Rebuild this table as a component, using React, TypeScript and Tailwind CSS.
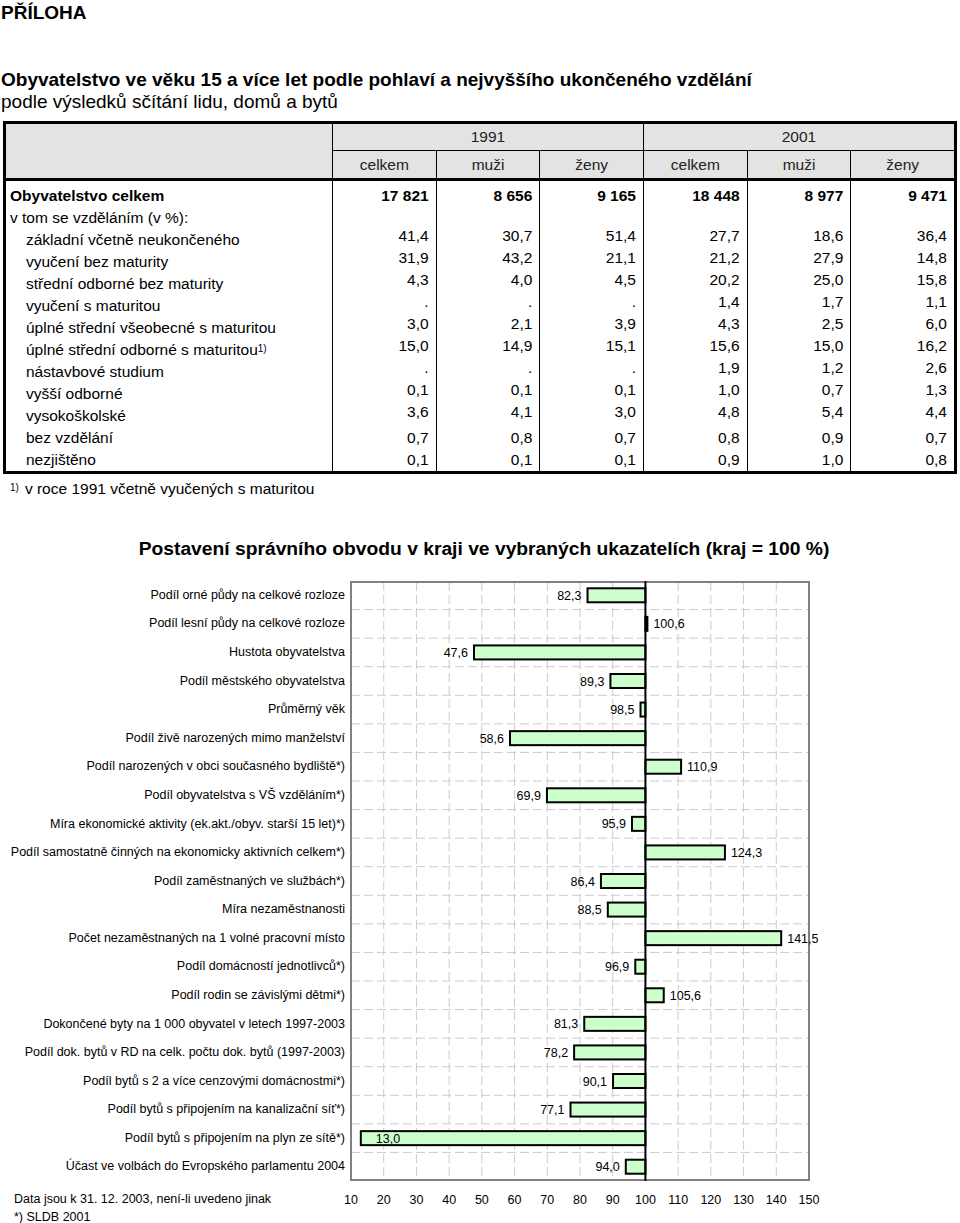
import React from "react";

const tableRows: { label: string; bold?: boolean; indent?: boolean; sup?: string; values: string[]; lift?: boolean }[] = [
  { label: "Obyvatelstvo celkem", bold: true, values: ["17 821", "8 656", "9 165", "18 448", "8 977", "9 471"] },
  { label: "v tom se vzděláním (v %):", values: ["", "", "", "", "", ""] },
  { label: "základní včetně neukončeného", indent: true, lift: true, values: ["41,4", "30,7", "51,4", "27,7", "18,6", "36,4"] },
  { label: "vyučení bez maturity", indent: true, lift: true, values: ["31,9", "43,2", "21,1", "21,2", "27,9", "14,8"] },
  { label: "střední odborné bez maturity", indent: true, lift: true, values: ["4,3", "4,0", "4,5", "20,2", "25,0", "15,8"] },
  { label: "vyučení s maturitou", indent: true, lift: true, values: [".", ".", ".", "1,4", "1,7", "1,1"] },
  { label: "úplné střední všeobecné s maturitou", indent: true, lift: true, values: ["3,0", "2,1", "3,9", "4,3", "2,5", "6,0"] },
  { label: "úplné střední odborné s maturitou", sup: "1)", indent: true, lift: true, values: ["15,0", "14,9", "15,1", "15,6", "15,0", "16,2"] },
  { label: "nástavbové studium", indent: true, lift: true, values: [".", ".", ".", "1,9", "1,2", "2,6"] },
  { label: "vyšší odborné", indent: true, lift: true, values: ["0,1", "0,1", "0,1", "1,0", "0,7", "1,3"] },
  { label: "vysokoškolské", indent: true, lift: true, values: ["3,6", "4,1", "3,0", "4,8", "5,4", "4,4"] },
  { label: "bez vzdělání", indent: true, values: ["0,7", "0,8", "0,7", "0,8", "0,9", "0,7"] },
  { label: "nezjištěno", indent: true, values: ["0,1", "0,1", "0,1", "0,9", "1,0", "0,8"] },
];

const chartData: [string, number][] = [
  ["Podíl orné půdy na celkové rozloze", 82.3],
  ["Podíl lesní půdy na celkové rozloze", 100.6],
  ["Hustota obyvatelstva", 47.6],
  ["Podíl městského obyvatelstva", 89.3],
  ["Průměrný věk", 98.5],
  ["Podíl živě narozených mimo manželství", 58.6],
  ["Podíl narozených v obci současného bydliště*)", 110.9],
  ["Podíl obyvatelstva s VŠ vzděláním*)", 69.9],
  ["Míra ekonomické aktivity (ek.akt./obyv. starší 15 let)*)", 95.9],
  ["Podíl samostatně činných na ekonomicky aktivních celkem*)", 124.3],
  ["Podíl zaměstnaných ve službách*)", 86.4],
  ["Míra nezaměstnanosti", 88.5],
  ["Počet nezaměstnaných na 1 volné pracovní místo", 141.5],
  ["Podíl domácností jednotlivců*)", 96.9],
  ["Podíl rodin se závislými dětmi*)", 105.6],
  ["Dokončené byty na 1 000 obyvatel v letech 1997-2003", 81.3],
  ["Podíl dok. bytů v RD na celk. počtu dok. bytů (1997-2003)", 78.2],
  ["Podíl bytů s 2 a více cenzovými domácnostmi*)", 90.1],
  ["Podíl bytů s připojením na kanalizační síť*)", 77.1],
  ["Podíl bytů s připojením na plyn ze sítě*)", 13.0],
  ["Účast ve volbách do Evropského parlamentu 2004", 94.0],
];

const fmt = (v: number) => v.toFixed(1).replace(".", ",");

function Chart() {
  const W = 458;
  const H = 600;
  const xs = (v: number) => 1 + ((v - 10) * W) / 140;
  const rowH = H / chartData.length;
  const ticks = Array.from({ length: 15 }, (_, i) => 10 + i * 10);
  const x100 = xs(100);
  return (
    <svg width={480} height={630} className="overflow-visible block">
      {ticks
        .filter((t) => t !== 10 && t !== 150 && t !== 100)
        .map((t) => (
          <line key={t} x1={xs(t)} x2={xs(t)} y1={1} y2={H - 1} stroke="#cccccc" strokeWidth={1} strokeDasharray="9 4" />
        ))}
      {chartData.slice(1).map((_, i) => (
        <line key={i} x1={1} x2={W + 1} y1={(i + 1) * rowH} y2={(i + 1) * rowH} stroke="#cccccc" strokeWidth={1} strokeDasharray="9 4" />
      ))}
      <rect x={1} y={1} width={W} height={H - 2} fill="none" stroke="#808080" strokeWidth={2} />
      {chartData.map(([, v], i) => {
        const cy = (i + 0.5) * rowH;
        const xv = xs(v);
        const left = Math.min(xv, x100);
        const w = Math.abs(xv - x100);
        let tx: number;
        let anchor: "start" | "end";
        if (v >= 100) {
          tx = xv + 6;
          anchor = "start";
        } else if (xv < 40) {
          tx = xv + 15;
          anchor = "start";
        } else {
          tx = xv - 6;
          anchor = "end";
        }
        return (
          <g key={i}>
            <rect x={left} y={cy - 7} width={Math.max(w, 1)} height={14} fill="#ccffcc" stroke="#000" strokeWidth={2} />
            <text x={tx} y={cy + 4.5} fontSize={12.5} textAnchor={anchor} fill="#000" fontFamily="Liberation Sans, Arial, sans-serif">
              {fmt(v)}
            </text>
          </g>
        );
      })}
      <line x1={x100} x2={x100} y1={0} y2={H} stroke="#000" strokeWidth={2} />
      {ticks.map((t) => (
        <text key={t} x={xs(t)} y={623} fontSize={12.5} textAnchor="middle" fill="#000" fontFamily="Liberation Sans, Arial, sans-serif">
          {t}
        </text>
      ))}
    </svg>
  );
}

export default function App() {
  return (
    <div className="w-[960px] bg-white text-black font-['Liberation_Sans',Arial,sans-serif]">
      <div className="pl-[1px] pt-[2px] text-[19px] leading-[22px] font-bold">PŘÍLOHA</div>
      <div className="mt-[45px] pl-[1px] text-[19px] leading-[22px]">
        <div className="font-bold">Obyvatelstvo ve věku 15 a více let podle pohlaví a nejvyššího ukončeného vzdělání</div>
        <div>podle výsledků sčítání lidu, domů a bytů</div>
      </div>

      <div className="mt-[8px] ml-[3px] w-[954px] border-[3px] border-black text-[15.5px]">
        <div className="grid grid-cols-[326px_repeat(6,1fr)] bg-[#e3e3e3] border-b-[3px] border-black text-[#222]">
          <div className="row-span-2" />
          <div className="col-span-3 h-[27px] border-l border-b border-black flex items-center justify-center">1991</div>
          <div className="col-span-3 h-[27px] border-l border-b border-black flex items-center justify-center">2001</div>
          {["celkem", "muži", "ženy", "celkem", "muži", "ženy"].map((h, i) => (
            <div key={i} className="h-[27px] border-l border-black flex items-center justify-center">
              {h}
            </div>
          ))}
        </div>
        <div className="grid grid-cols-[326px_repeat(6,1fr)]">
          {tableRows.map((r, ri) => {
            const h = ri === 0 ? "h-[26px] pt-[4px]" : "h-[22px]";
            return (
              <React.Fragment key={ri}>
                <div className={`${h} flex items-center ${r.indent ? "pl-[20px]" : "pl-[4px]"} ${r.bold ? "font-bold" : ""}`}>
                  <span className="whitespace-nowrap">
                    {r.label}
                    {r.sup && <sup className="text-[10px] relative -top-[3px]">{r.sup}</sup>}
                  </span>
                </div>
                {r.values.map((v, vi) => (
                  <div
                    key={vi}
                    className={`${h} border-l border-black flex items-center justify-end pr-[7px] ${r.bold ? "font-bold" : ""} ${r.lift ? "pb-[8px]" : ""}`}
                  >
                    {v}
                  </div>
                ))}
              </React.Fragment>
            );
          })}
        </div>
      </div>
      <div className="mt-[6px] pl-[10px] text-[15.5px] leading-[18px]">
        <sup className="text-[10px] relative -top-[3px]">1)</sup>
        <span className="ml-[6px]">v roce 1991 včetně vyučených s maturitou</span>
      </div>

      <div className="mt-[40px] pl-[8px] text-center text-[19.25px] leading-[22px] font-bold">
        Postavení správního obvodu v kraji ve vybraných ukazatelích (kraj = 100 %)
      </div>

      <div className="mt-[21px] flex">
        <div className="w-[350px] shrink-0">
          <div className="h-[600px] flex flex-col pr-[5px] text-[12.5px]">
            {chartData.map(([l], i) => (
              <div key={i} className="flex-1 flex items-center justify-end whitespace-nowrap">
                {l}
              </div>
            ))}
          </div>
          <div className="mt-[9px] pl-[14px] text-[12.5px] leading-[18px]">
            <div>Data jsou k 31. 12. 2003, není-li uvedeno jinak</div>
            <div>*) SLDB 2001</div>
          </div>
        </div>
        <Chart />
      </div>
    </div>
  );
}
